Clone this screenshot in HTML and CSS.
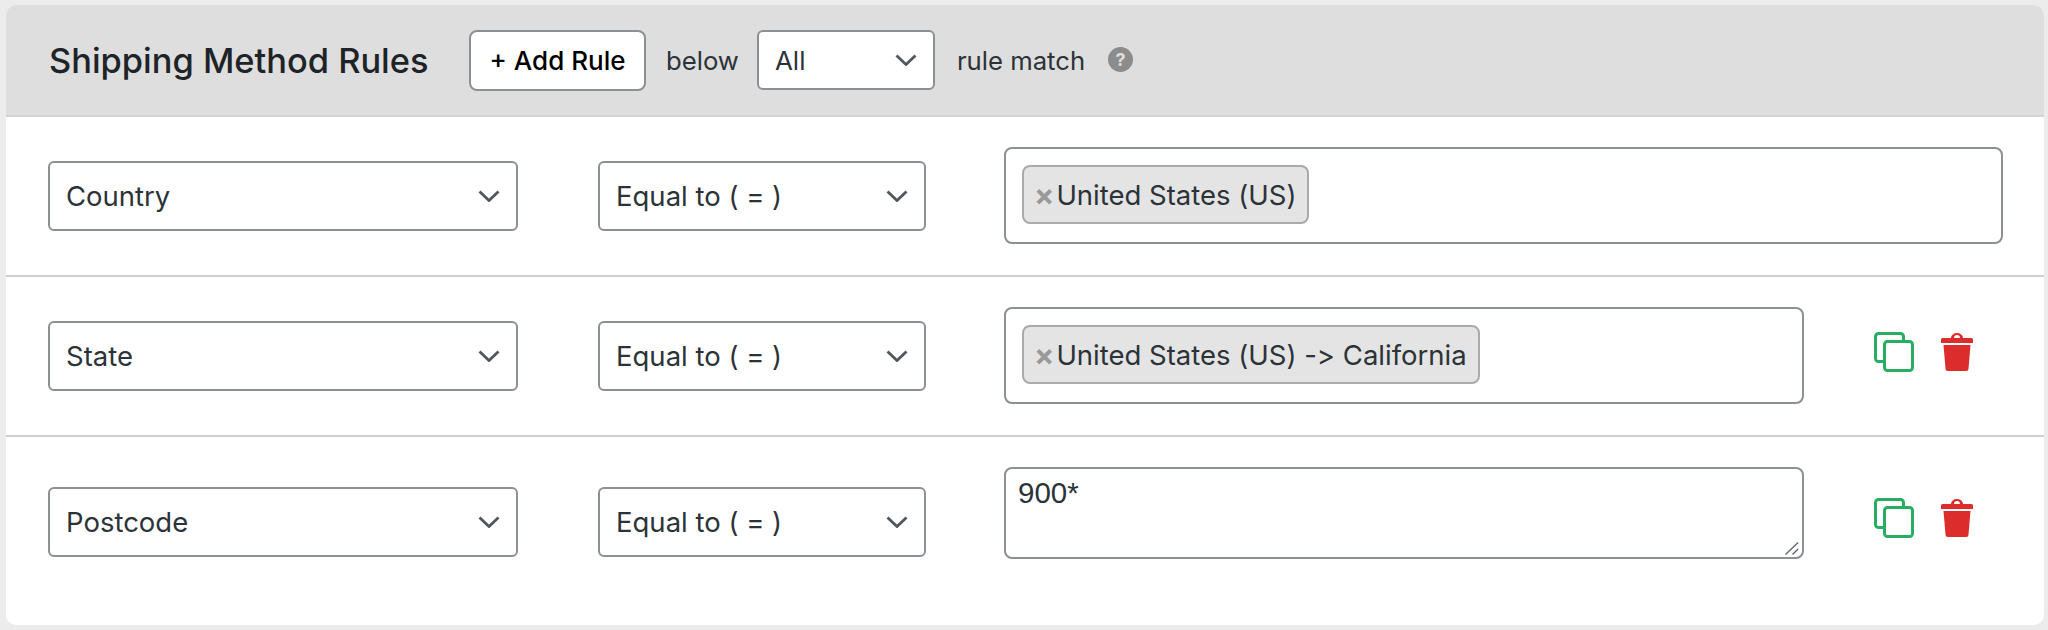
FILE: index.html
```html
<!DOCTYPE html>
<html lang="en">
<head>
  <meta charset="UTF-8" />
  <title>Shipping Method Rules</title>
  <link rel="stylesheet" href="styles.css">
</head>
<body>

  <div class="rules-card">
    <div class="rules-header">
      <h2>Shipping Method Rules</h2>
      <button class="add-rule">+ Add Rule</button>
      <span class="below-text">below</span>
      <select class="match-select">
        <option>All</option>
      </select>
      <span class="match-text">rule match</span>
      <span class="help-tip">?</span>
    </div>

    <!-- Rule rows -->
    <div class="rule-row">
      <select class="field-select"><option>Country</option></select>
      <select class="operator-select"><option>Equal to ( = )</option></select>
      <div class="tag-box">
        <span class="tag"><span class="tag-remove">×</span>United States (US)</span>
      </div>
    </div>

    <div class="rule-row">
      <select class="field-select"><option>State</option></select>
      <select class="operator-select"><option>Equal to ( = )</option></select>
      <div class="tag-box short">
        <span class="tag"><span class="tag-remove">×</span>United States (US) -&gt; California</span>
      </div>
      <div class="rule-actions">
        <svg class="copy-icon" viewBox="0 0 40 40"><path d="M10 29.500H4.500a3 3 0 0 1-3-3v-22a3 3 0 0 1 3-3h22a3 3 0 0 1 3 3V9"/><rect x="10.500" y="9.500" width="28" height="29" rx="3"/></svg>
        <svg class="trash-icon" viewBox="0 0 32 38"><path d="M10 5a6 5 0 0 1 12 0h8.500A1.500 1.500 0 0 1 32 6.500V10H0V6.500A1.500 1.500 0 0 1 1.500 5zM13 5h6a3 3 0 0 0-6 0zM2.500 12h27l-2 23.500a2.500 2.500 0 0 1-2.500 2.500H7a2.500 2.500 0 0 1-2.500-2.500z"/></svg>
      </div>
    </div>

    <div class="rule-row last">
      <select class="field-select"><option>Postcode</option></select>
      <select class="operator-select"><option>Equal to ( = )</option></select>
      <div class="textarea-wrap">
        <textarea class="postcode-box">900*</textarea>
        <svg class="resize-grip" viewBox="0 0 16 16"><path d="M.5 14.500 14 1.500M8 14.500l6-6"/></svg>
      </div>
      <div class="rule-actions">
        <svg class="copy-icon" viewBox="0 0 40 40"><path d="M10 29.500H4.500a3 3 0 0 1-3-3v-22a3 3 0 0 1 3-3h22a3 3 0 0 1 3 3V9"/><rect x="10.500" y="9.500" width="28" height="29" rx="3"/></svg>
        <svg class="trash-icon" viewBox="0 0 32 38"><path d="M10 5a6 5 0 0 1 12 0h8.500A1.500 1.500 0 0 1 32 6.500V10H0V6.500A1.500 1.500 0 0 1 1.500 5zM13 5h6a3 3 0 0 0-6 0zM2.500 12h27l-2 23.500a2.500 2.500 0 0 1-2.500 2.500H7a2.500 2.500 0 0 1-2.500-2.500z"/></svg>
      </div>
    </div>
  </div>

</body>
</html>
```

FILE: styles.css
```css
body {
  margin: 0;
  padding: 5px 4px 5px 6px;
  font-family: 'Inter', sans-serif;
  font-size: 27.5px;
  font-feature-settings: "calt" 0;
  color: #2c3338;
  background-color: #ececec;
}

.rules-card {
  background: #fff;
  border-radius: 10px;
  overflow: hidden;
  height: 620px;
}

.rules-header {
  display: flex;
  align-items: center;
  height: 110px;
  padding-left: 43px;
  font-size: 25.7px;
  background-color: #dedede;
  border-bottom: 2px solid #d3d3d3;
}

.rules-header h2 {
  width: 420px;
  margin: 0;
  font-size: 34.4px;
  font-weight: 500;
  white-space: nowrap;
  color: #1d2327;
}

.add-rule {
  width: 177px;
  height: 61px;
  font-family: inherit;
  font-size: 26px;
  font-weight: 500;
  color: #000;
  background: #fff;
  border: 2px solid #8c8f94;
  border-radius: 8px;
}

.below-text {
  margin: 0 18px 0 20px;
}

select {
  appearance: none;
  font-family: inherit;
  font-size: 27.5px;
  font-feature-settings: inherit;
  color: #2c3338;
  background: #fff url("data:image/svg+xml,%3Csvg xmlns='http://www.w3.org/2000/svg' viewBox='0 0 22 12'%3E%3Cpath d='M1.500 1.500 11 10.500l9.500-9' fill='none' stroke='%2350575e' stroke-width='2.800'/%3E%3C/svg%3E") no-repeat right 16px center / 22px 12px;
  border: 2px solid #8c8f94;
  border-radius: 6px;
  padding: 0 16px;
}

.match-select {
  width: 178px;
  height: 60px;
  font-size: 26px;
}

.match-text {
  margin: 0 23px 0 22px;
}

.help-tip {
  width: 25px;
  height: 25px;
  border-radius: 50%;
  background: #8c8c8c;
  color: #dedede;
  font-size: 18px;
  font-weight: 700;
  line-height: 25px;
  text-align: center;
  margin-top: -1px;
}

.rule-row {
  display: flex;
  align-items: center;
  padding: 30px 0 31px 42px;
  border-bottom: 2px solid #d0d0d0;
}

.rule-row.last {
  border-bottom: none;
  align-items: flex-start;
}

.rule-row.last select {
  margin-top: 20px;
}

.field-select {
  width: 470px;
  height: 70px;
  margin-right: 80px;
}

.operator-select {
  width: 328px;
  height: 70px;
  margin-right: 78px;
}

.tag-box {
  box-sizing: border-box;
  width: 999px;
  height: 97px;
  padding: 16px 16px;
  border: 2px solid #8c8f94;
  border-radius: 8px;
}

.tag-box.short {
  width: 800px;
}

.tag {
  display: inline-flex;
  align-items: center;
  box-sizing: border-box;
  height: 59px;
  padding: 0 11px 0 10px;
  background: #e4e4e4;
  border: 2px solid #aaa;
  border-radius: 8px;
}

.tag-remove {
  margin-right: 2px;
  color: #999;
  font-size: 30px;
  font-weight: 700;
}

.textarea-wrap {
  position: relative;
  width: 800px;
  height: 92px;
}

.postcode-box {
  box-sizing: border-box;
  display: block;
  width: 800px;
  height: 92px;
  padding: 7px 12px;
  font-family: 'Liberation Sans', sans-serif;
  font-size: 29.5px;
  color: #2c3338;
  border: 2px solid #8c8f94;
  border-radius: 8px;
  resize: none;
}

.resize-grip {
  position: absolute;
  right: 4px;
  bottom: 3px;
  width: 15px;
  height: 15px;
  fill: none;
  stroke: #666;
  stroke-width: 1.5;
}

.rule-actions {
  display: flex;
  align-items: center;
  gap: 27px;
  margin: -8px 0 0 70px;
}

.rule-row.last .rule-actions {
  margin-top: 31px;
}

.copy-icon {
  width: 40px;
  height: 40px;
  fill: none;
  stroke: #27ae60;
  stroke-width: 3;
}

.trash-icon {
  width: 32px;
  height: 38px;
  fill: #dd2c2c;
}
```
